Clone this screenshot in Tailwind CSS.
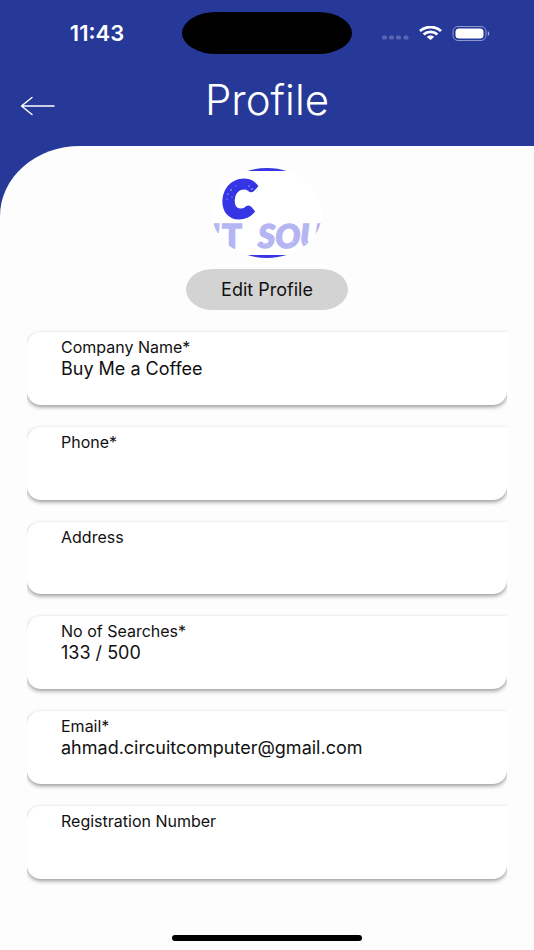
<!DOCTYPE html>
<html lang="en">
<head>
<meta charset="utf-8">
<meta name="viewport" content="width=device-width, initial-scale=1">
<title>Profile</title>
<script src="https://cdn.jsdelivr.net/npm/@tailwindcss/browser@4"></script>
</head>
<body class="flex min-h-screen flex-col bg-[#263898] font-['Inter','Liberation_Sans',sans-serif] text-[#111]">

<header class="text-white">
  <div class="grid grid-cols-[1fr_170px_1fr] items-center pt-3">
    <div class="flex justify-center pl-3">
      <time class="text-[22px] leading-6 font-semibold">11:43</time>
    </div>
    <div class="h-[42px] rounded-[34px/21px] bg-black"></div>
    <div class="flex items-center justify-end gap-[10px] pr-11">
      <svg class="mt-2 h-[5px] w-7" viewBox="0 0 28 5" fill="#5765b2" aria-hidden="true">
        <rect x="1" y=".5" width="5" height="4" rx="1.500"/><rect x="8" y=".5" width="5" height="4" rx="1.500"/><rect x="15" y=".5" width="5" height="4" rx="1.500"/><rect x="22.500" y=".5" width="5" height="4" rx="1.500"/>
      </svg>
      <svg class="h-[14px] w-[23px]" viewBox="0 0 23 14" fill="none" stroke="#fff" role="img" aria-label="Wi-Fi">
        <path d="M1 5C6.500-.2 16.500-.2 22 5" stroke-width="2.800"/>
        <path d="M4.600 8.400c3.800-3.300 10-3.300 13.800 0" stroke-width="2.700"/>
        <path d="M7.800 11c2-1.900 5.400-1.900 7.400 0L11.500 14Z" fill="#fff" stroke="none"/>
      </svg>
      <svg class="h-[15px] w-[38px]" viewBox="0 0 38 15" role="img" aria-label="Battery full">
        <rect x="1" y=".5" width="33" height="14" rx="5" fill="none" stroke="#8f99cd"/>
        <rect x="3.500" y="2.500" width="28" height="10" rx="3.500" fill="#fff"/>
        <path d="M35.800 5.200c2 .7 2 3.900 0 4.600Z" fill="#a6aed8"/>
      </svg>
    </div>
  </div>
  <div class="grid grid-cols-[1fr_auto_1fr] items-center pt-[18px] pb-[18px]">
    <a href="#" aria-label="Back" class="mt-3 ml-5 w-9">
      <svg class="h-5 w-9" viewBox="0 0 36 20" fill="none" stroke="#fff" stroke-width="1.500" stroke-linecap="round" stroke-linejoin="round" aria-hidden="true"><path d="M12 1.500 1.500 10 12 18.500M1.500 10h32.500"/></svg>
    </a>
    <h1 class="text-[42px] leading-14 font-light">Profile</h1>
  </div>
</header>

<main class="flex flex-1 flex-col rounded-tl-[80px_70px] bg-[#fdfdfd] pt-[22px]">
  <div class="flex flex-col items-center gap-[11px]">
    <svg class="h-[90px] w-[110px]" viewBox="0 0 110 90" role="img" aria-label="Company logo">
      <defs><clipPath id="avatar"><ellipse cx="55" cy="45" rx="55" ry="45"/></clipPath></defs>
      <g clip-path="url(#avatar)">
        <rect width="110" height="90" fill="#fff"/>
        <rect width="110" height="3" fill="#3636e6"/>
        <rect y="87" width="110" height="3" fill="#3636e6"/>
        <g font-family="Lato, sans-serif" font-weight="900">
          <text x="11" y="49" font-size="50" font-style="italic" fill="#3636e6" stroke="#3636e6" stroke-width="5">C</text>
          <g font-size="33" fill="#b6b6f3" stroke="#b6b6f3" stroke-width="1.500">
            <text x="1" y="80">'</text>
            <text x="10" y="80">T</text>
            <text x="46" y="80" font-style="italic">SOU</text>
          </g>
        </g>
        <g fill="#fff" opacity=".7">
          <circle cx="16" cy="26" r=".7"/><circle cx="19" cy="22" r=".8"/><circle cx="15" cy="31" r=".6"/><circle cx="20" cy="29" r=".5"/><circle cx="37" cy="18" r=".7"/><circle cx="40" cy="21" r=".8"/><circle cx="36" cy="23" r=".5"/><circle cx="24" cy="18" r=".5"/><circle cx="52" cy="76" r=".7"/><circle cx="56" cy="77" r=".6"/><circle cx="81" cy="74" r=".8"/><circle cx="78" cy="77" r=".6"/><circle cx="93" cy="75" r=".7"/>
        </g>
      </g>
    </svg>
    <button type="button" class="h-[41px] rounded-[27px/21px] bg-[#d3d3d3] px-[35px] text-lg">Edit Profile</button>
  </div>

  <form class="mt-4 flex flex-1 flex-col px-[27px]">
    <div class="flex flex-1 flex-col overflow-hidden pt-[6px] pb-4">
      <div class="flex-1 rounded-[14px_0_14px_14px] bg-white px-[34px] pt-[5px] shadow-[0_2px_4px_rgba(0,0,0,0.400)]">
        <label for="company" class="block text-base leading-5">Company Name*</label>
        <input id="company" type="text" value="Buy Me a Coffee" class="block w-full text-lg leading-6 outline-none">
      </div>
    </div>
    <div class="flex flex-1 flex-col overflow-hidden pt-[6px] pb-4">
      <div class="flex-1 rounded-[14px_0_14px_14px] bg-white px-[34px] pt-[5px] shadow-[0_2px_4px_rgba(0,0,0,0.400)]">
        <label for="phone" class="block text-base leading-5">Phone*</label>
        <input id="phone" type="tel" class="block w-full text-lg leading-6 outline-none">
      </div>
    </div>
    <div class="flex flex-1 flex-col overflow-hidden pt-[6px] pb-4">
      <div class="flex-1 rounded-[14px_0_14px_14px] bg-white px-[34px] pt-[5px] shadow-[0_2px_4px_rgba(0,0,0,0.400)]">
        <label for="address" class="block text-base leading-5">Address</label>
        <input id="address" type="text" class="block w-full text-lg leading-6 outline-none">
      </div>
    </div>
    <div class="flex flex-1 flex-col overflow-hidden pt-[6px] pb-4">
      <div class="flex-1 rounded-[14px_0_14px_14px] bg-white px-[34px] pt-[5px] shadow-[0_2px_4px_rgba(0,0,0,0.400)]">
        <label for="searches" class="block text-base leading-5">No of Searches*</label>
        <input id="searches" type="text" value="133 / 500" class="block w-full text-lg leading-6 outline-none">
      </div>
    </div>
    <div class="flex flex-1 flex-col overflow-hidden pt-[6px] pb-4">
      <div class="flex-1 rounded-[14px_0_14px_14px] bg-white px-[34px] pt-[5px] shadow-[0_2px_4px_rgba(0,0,0,0.400)]">
        <label for="email" class="block text-base leading-5">Email*</label>
        <input id="email" type="email" value="ahmad.circuitcomputer@gmail.com" class="block w-full text-lg leading-6 outline-none">
      </div>
    </div>
    <div class="flex flex-1 flex-col overflow-hidden pt-[6px] pb-4">
      <div class="flex-1 rounded-[14px_0_14px_14px] bg-white px-[34px] pt-[5px] shadow-[0_2px_4px_rgba(0,0,0,0.400)]">
        <label for="registration" class="block text-base leading-5">Registration Number</label>
        <input id="registration" type="text" class="block w-full text-lg leading-6 outline-none">
      </div>
    </div>
  </form>

  <div class="mx-auto mt-10 mb-[9px] h-[6px] w-[190px] rounded-full bg-black"></div>
</main>
</body>
</html>
